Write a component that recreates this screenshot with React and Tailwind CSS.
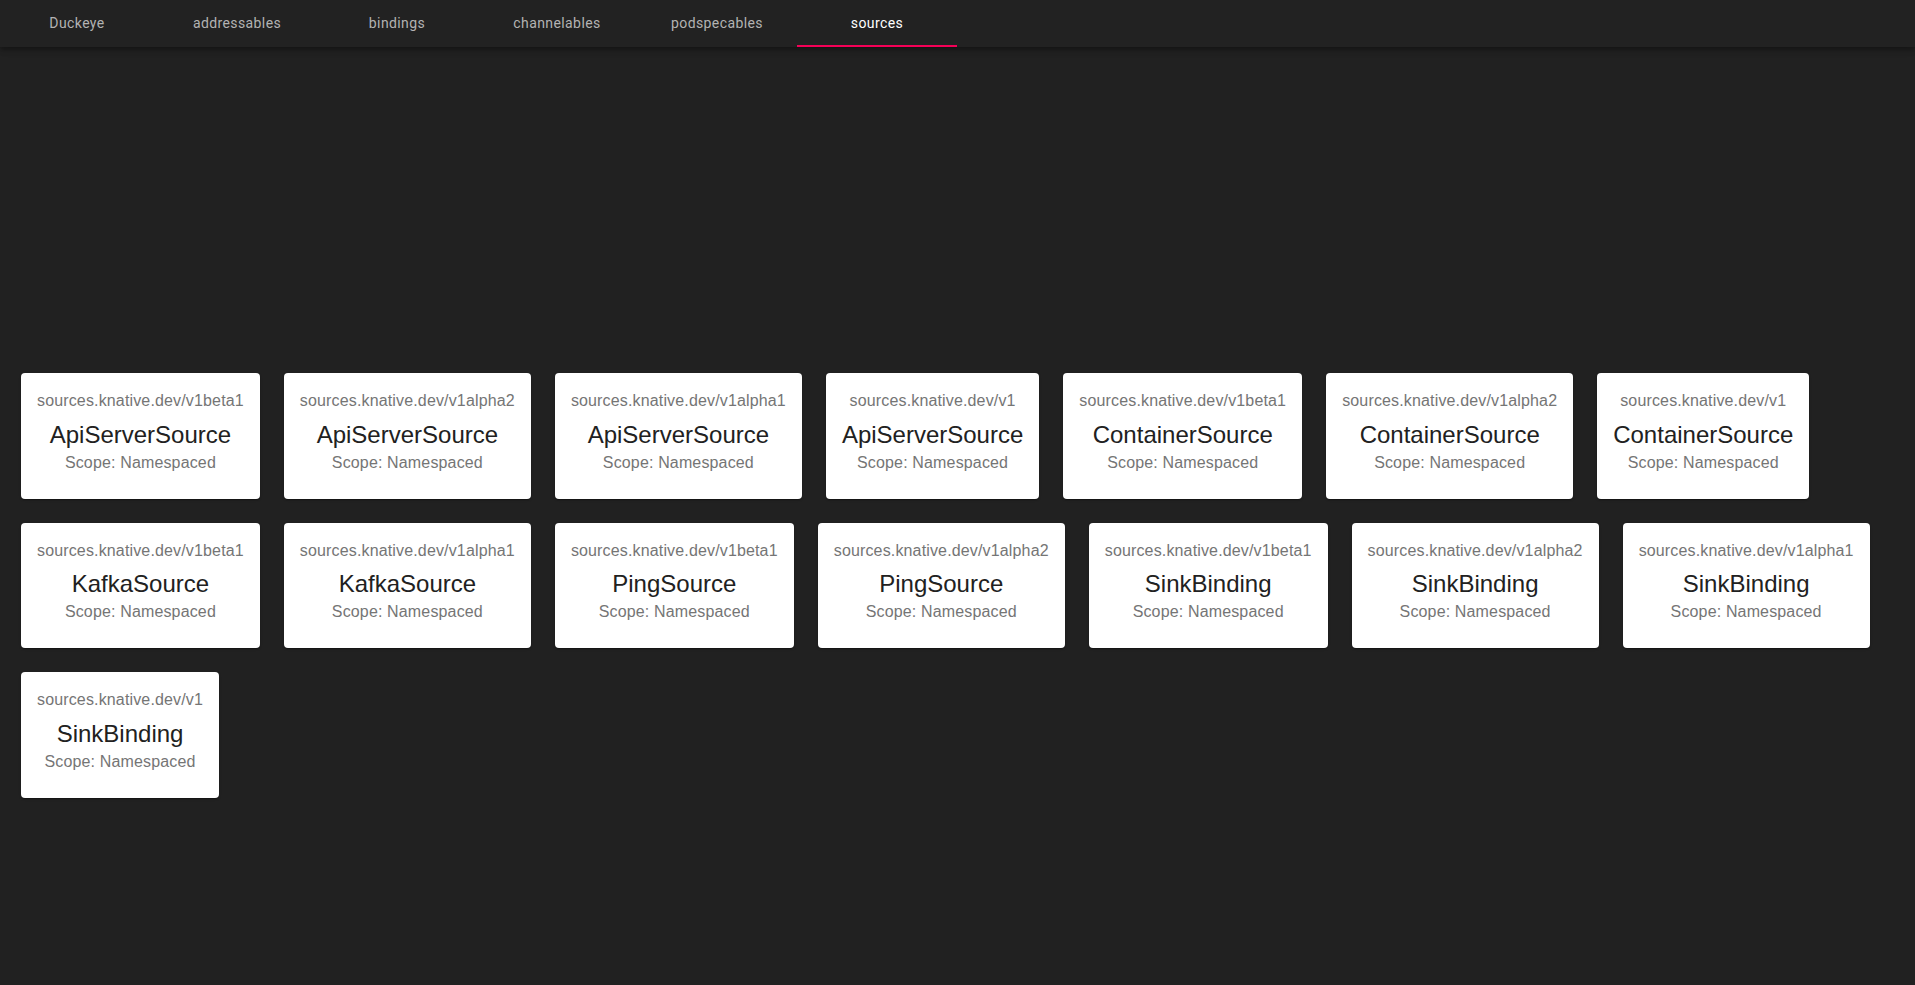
const TABS = ["Duckeye", "addressables", "bindings", "channelables", "podspecables", "sources"];

const SOURCES = [
  ["v1beta1", "ApiServerSource"],
  ["v1alpha2", "ApiServerSource"],
  ["v1alpha1", "ApiServerSource"],
  ["v1", "ApiServerSource"],
  ["v1beta1", "ContainerSource"],
  ["v1alpha2", "ContainerSource"],
  ["v1", "ContainerSource"],
  ["v1beta1", "KafkaSource"],
  ["v1alpha1", "KafkaSource"],
  ["v1beta1", "PingSource"],
  ["v1alpha2", "PingSource"],
  ["v1beta1", "SinkBinding"],
  ["v1alpha2", "SinkBinding"],
  ["v1alpha1", "SinkBinding"],
  ["v1", "SinkBinding"],
];

function SourceCard({ version, kind }) {
  return (
    <div className="rounded bg-white px-4 pt-4 pb-6 text-center shadow-[0_2px_1px_-1px_rgba(0,0,0,0.2),0_1px_1px_0_rgba(0,0,0,0.14),0_1px_3px_0_rgba(0,0,0,0.12)]">
      <div className="mb-[5.6px] text-[16px] leading-[24px] tracking-[0.15px] text-[#757575]">
        sources.knative.dev/{version}
      </div>
      <div className="text-[24px] leading-[32px] text-[#212121]">{kind}</div>
      <div className="text-[16px] leading-[24px] tracking-[0.15px] text-[#757575]">Scope: Namespaced</div>
    </div>
  );
}

export default function App() {
  const active = "sources";

  return (
    <div className="min-h-[985px] bg-[#212121] font-['Liberation_Sans',Arial,sans-serif]">
      <header className="relative z-10 h-[47px] bg-[#222222] shadow-[0_2px_4px_-1px_rgba(0,0,0,0.2),0_4px_5px_0_rgba(0,0,0,0.14),0_1px_10px_0_rgba(0,0,0,0.12)]">
        <nav className="-ml-[3px] flex h-full font-['Roboto',sans-serif] text-[14px] tracking-[0.4px]">
          {TABS.map((t) => (
            <div
              key={t}
              className={
                "relative flex w-[160px] items-center justify-center pb-[1px] " +
                (t === active ? "text-white" : "text-[#b3b3b3]")
              }
            >
              {t}
              {t === active && <span className="absolute bottom-0 left-0 h-[2px] w-full bg-[#f50057]" />}
            </div>
          ))}
        </nav>
      </header>

      <main className="flex flex-wrap items-start gap-6 px-[21px] pt-[326px]">
        {SOURCES.map(([v, k], i) => (
          <SourceCard key={i} version={v} kind={k} />
        ))}
      </main>
    </div>
  );
}
